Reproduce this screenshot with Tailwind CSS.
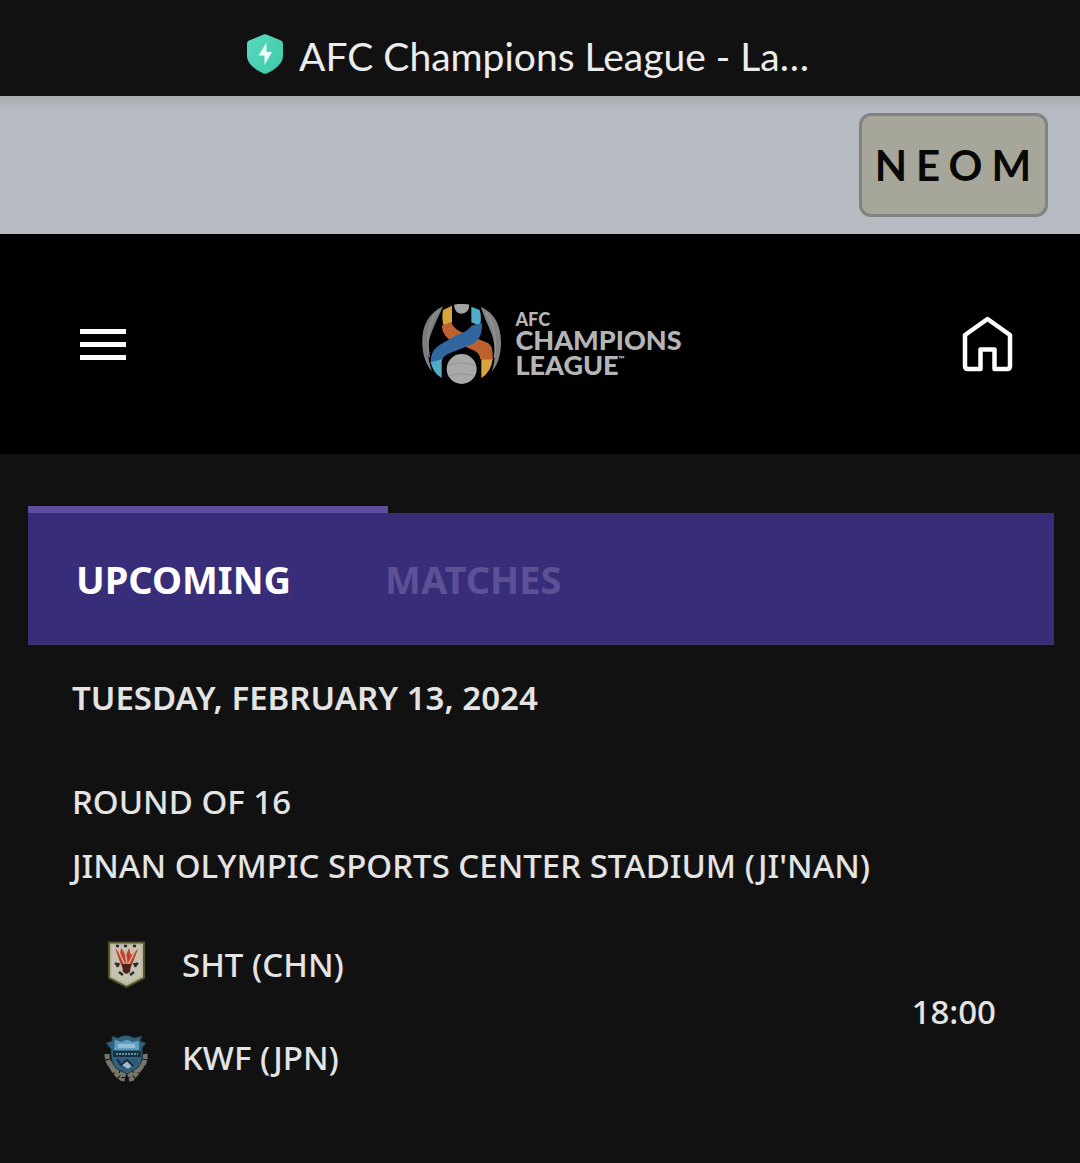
<!DOCTYPE html>
<html lang="en">
<head>
<meta charset="utf-8">
<meta name="viewport" content="width=device-width, initial-scale=1">
<title>AFC Champions League - Latest</title>
<script src="https://cdn.jsdelivr.net/npm/@tailwindcss/browser@4"></script>
</head>
<body class="min-h-screen bg-[#111111] font-['Noto_Sans',sans-serif] text-[33px] leading-[44px] font-medium text-[#e4e4e4]">

<div class="flex h-24 items-center justify-center gap-4 pt-3 pr-6">
  <svg class="h-10 w-9 shrink-0" viewBox="0 0 36 40" aria-hidden="true">
    <defs><linearGradient id="shield" x1="0" y1="0" x2="1" y2="1"><stop offset="0" stop-color="#5ad9bf"/><stop offset="1" stop-color="#3cc9a9"/></linearGradient></defs>
    <path d="M16.500 .6Q18 0 19.500 .6L34 6.500Q36 7.400 36 9.500V22C36 30 26.500 36.500 19.500 39.500Q18 40.200 16.500 39.500C9.500 36.500 0 30 0 22V9.500Q0 7.400 2 6.500Z" fill="url(#shield)"/>
    <path d="M19.500 8.500L11.500 21.500H17.500V31L25 18H19.500Z" fill="#effffb"/>
  </svg>
  <h1 class="pt-1 font-['Lato',sans-serif] text-[39px] leading-[48px] font-normal whitespace-nowrap text-[#ececec]">AFC Champions League - La…</h1>
</div>

<div class="flex h-[138px] items-center justify-end bg-linear-to-b from-[#a9adb0] from-0% via-[#b6bac3] via-10% to-[#b7bbc1] pr-8">
  <a href="#" class="flex h-[104px] w-[189px] items-center justify-center rounded-xl border-3 border-[#828283] bg-[#a7a69a] pl-2 font-['Lato',sans-serif] text-[42px] leading-[48px] font-bold tracking-[9px] text-[#080806]">NEOM</a>
</div>

<header class="flex h-[220px] items-center justify-between bg-black pr-[67px] pl-20">
  <button type="button" aria-label="Open menu" class="flex w-[46px] flex-col gap-2">
    <span class="h-[5px] bg-white"></span><span class="h-[5px] bg-white"></span><span class="h-[5px] bg-white"></span>
  </button>
  <a href="#" class="ml-4 flex items-center gap-[14px] font-['Lato',sans-serif] font-black text-[#b5b5b5]">
    <svg class="h-20 w-[79px]" viewBox="21 15 237 240" aria-hidden="true">
      <path d="M84 22C37 44 19 86 22 139C24 174 35 200 51 217C36 174 35 137 49 102C59 74 72 52 84 22Z" fill="#7b7d80"/>
      <path d="M70 36C41 69 33 119 43 174" fill="none" stroke="#8f9092" stroke-width="4"/>
      <path d="M198 23C241 43 259 82 258 135C257 175 244 204 231 217C243 178 242 139 230 105C220 77 207 56 198 23Z" fill="#818283"/>
      <path d="M211 39C240 74 246 122 238 176" fill="none" stroke="#959696" stroke-width="4"/>
      <path d="M117 17Q140 12 163 17Q162 43 139 44Q118 42 117 17Z" fill="#a4a4a4"/>
      <path d="M84 33L111 20V70L87 82Q79 64 84 33Z" fill="#d9a43b"/>
      <path d="M80 80L109 69C112 81 122 92 139 99L220 133Q235 143 233 182L196 181Q196 163 174 153L113 127Q83 113 80 80Z" fill="#bf6031"/>
      <path d="M169 23L194 33Q202 59 194 82L169 70Z" fill="#50acc8"/>
      <path d="M169 80L201 72Q204 121 168 137L100 164Q83 172 80 188L47 194Q45 157 72 139L125 108Q160 96 169 80Z" fill="#30659d"/>
      <path d="M47 190L80 181V237Q55 224 47 190Z" fill="#52aac7"/>
      <path d="M199 181H233Q228 220 199 237Z" fill="#d9a43b"/>
      <circle cx="140" cy="210" r="45" fill="#a8a8a8"/>
      <path d="M98 199Q139 185 181 199M101 230Q142 220 179 230" fill="none" stroke="#9b9b9b" stroke-width="4"/>
    </svg>
    <span class="flex flex-col">
      <span class="text-[18px] leading-[16px]">AFC</span>
      <span class="text-[27px] leading-[25px]">CHAMPIONS</span>
      <span class="flex text-[27px] leading-[25px]">LEAGUE<span class="text-[8px] leading-[14px]">™</span></span>
    </span>
  </a>
  <a href="#" aria-label="Home">
    <svg class="h-14 w-[51px]" viewBox="0 0 51 56" fill="none" stroke="#fff" stroke-width="4.500" stroke-linejoin="round" aria-hidden="true">
      <path d="M25.500 3L3 19V50Q3 53 6 53H18.500V33.500H32.500V53H45Q48 53 48 50V19Z"/>
    </svg>
  </a>
</header>

<main class="pt-[52px] pr-[26px] pb-14 pl-7">
  <div class="h-[7px] w-[360px] bg-[#5e4ea0]"></div>
  <nav class="flex h-[132px] items-center gap-[94px] border-b border-[#40386c] bg-[#372d78] pl-12 text-[38px] leading-[52px] font-bold">
    <button type="button" class="text-white">UPCOMING</button>
    <button type="button" class="text-[#5d5095]">MATCHES</button>
  </nav>

  <section class="pr-[58px] pl-11">
    <h2 class="mt-[31px] font-semibold">TUESDAY, FEBRUARY 13, 2024</h2>
    <p class="mt-[60px]">ROUND OF 16</p>
    <p class="mt-5">JINAN OLYMPIC SPORTS CENTER STADIUM (JI'NAN)</p>
    <div class="mt-[53px] flex items-center justify-between pl-8">
      <ul class="flex flex-col gap-[45px]">
        <li class="flex h-12 items-center gap-8">
          <svg class="h-12 w-[46px]" viewBox="0 0 46 48" aria-hidden="true">
            <path d="M5 1.500H40V37L22.500 46L5 37Z" fill="#bab7a0" stroke="#55552a" stroke-width="2"/>
            <path d="M8 4.500H37V35L22.500 42L8 35Z" fill="#c8c3b1"/>
            <path d="M11 7L17 24L20 29H25L28 24L34 8L27 14L25 7L22 14L17 7L16 13Z" fill="#b8442f"/>
            <path d="M14 9L21 24M21 9L23 24M31 10L24 24" stroke="#dfae96" stroke-width="1.500"/>
            <path d="M18 23H27L26 31L22.500 33L19 31Z" fill="#4b211a"/>
            <path d="M12 5h3M20 5h3M29 5h3M11 22l4 3M34 22l-4 3M15 31l4 3M30 31l-4 3M13 26l2-4M32 26l-2-4" stroke="#292b2c" stroke-width="2.500"/>
          </svg>
          <span>SHT (CHN)</span>
        </li>
        <li class="flex h-12 items-center gap-8">
          <svg class="h-12 w-[46px]" viewBox="0 0 46 48" aria-hidden="true">
            <path d="M3 20Q3 34 18 39M6 28Q9 38 17 44M41 20Q43 33 27 39M39 28Q35 38 27 45M20 38L18 47M25 38L28 47" fill="none" stroke="#77756b" stroke-width="5" stroke-dasharray="5 1"/>
            <path d="M8 2L14 4Q22 -1 30 4L38 2L36 7L42 9L38 14Q40 28 33 34L23 40L12 34Q6 27 7 15L2 9L8 7Z" fill="#33627b" stroke="#183645"/>
            <path d="M11 6L18 8Q23 4 28 8L35 7V16H10Z" fill="#5c9fc3"/>
            <path d="M14 10H31V14H14Z" fill="#94bed2"/>
            <path d="M9 17H37V23H9Z" fill="#172f42"/>
            <path d="M12 20H34" stroke="#638da1" stroke-width="2" stroke-dasharray="2 1"/>
            <path d="M12 25H34Q31 34 23 37Q15 34 12 25Z" fill="#30577d"/>
            <path d="M18 31L23 27L29 31L24 35Z" fill="#a7bdc8"/>
            <path d="M13 25L17 31L23 26L29 32" fill="none" stroke="#172d43" stroke-width="2"/>
          </svg>
          <span>KWF (JPN)</span>
        </li>
      </ul>
      <time>18:00</time>
    </div>
  </section>
</main>
</body>
</html>
